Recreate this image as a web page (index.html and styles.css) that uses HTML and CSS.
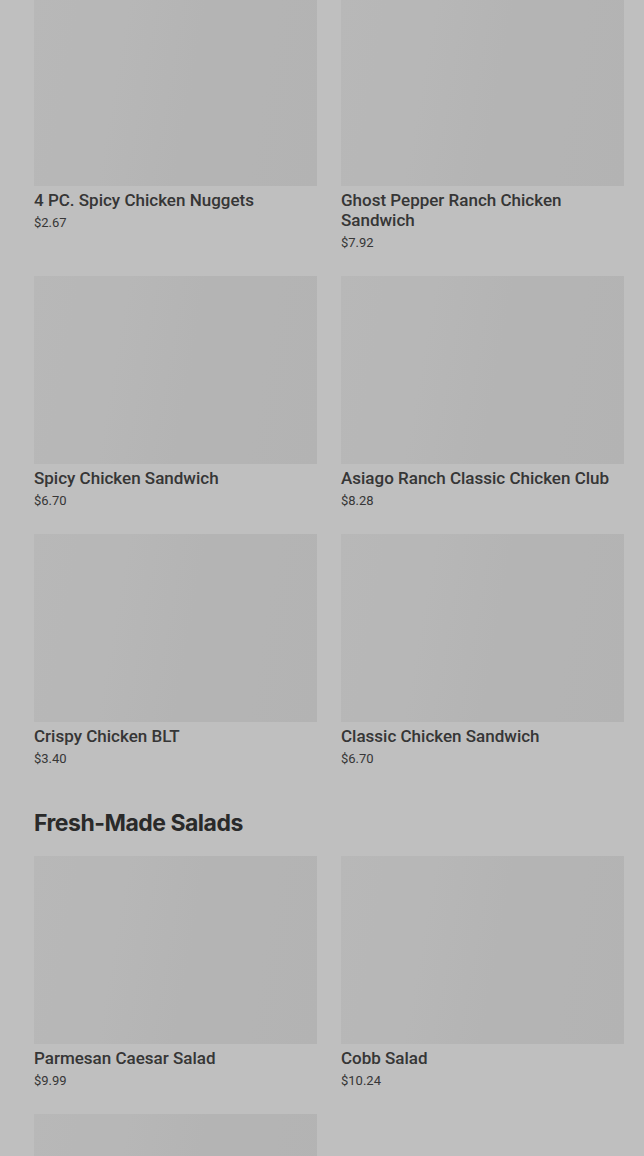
FILE: index.html
```html
<!DOCTYPE html>
<html lang="en">
<head>
  <meta charset="UTF-8">
  <meta name="viewport" content="width=device-width, initial-scale=1.0">
  <title>Menu</title>
  <link rel="stylesheet" href="styles.css">
</head>
<body>
  <main class="menu">
    <section class="category">
      <div class="item-grid">
        <div class="item">
          <div class="item-image"></div>
          <h3 class="item-name">4 PC. Spicy Chicken Nuggets</h3>
          <p class="item-price">$2.67</p>
        </div>
        <div class="item">
          <div class="item-image"></div>
          <h3 class="item-name">Ghost Pepper Ranch Chicken Sandwich</h3>
          <p class="item-price">$7.92</p>
        </div>
        <div class="item">
          <div class="item-image"></div>
          <h3 class="item-name">Spicy Chicken Sandwich</h3>
          <p class="item-price">$6.70</p>
        </div>
        <div class="item">
          <div class="item-image"></div>
          <h3 class="item-name">Asiago Ranch Classic Chicken Club</h3>
          <p class="item-price">$8.28</p>
        </div>
        <div class="item">
          <div class="item-image"></div>
          <h3 class="item-name">Crispy Chicken BLT</h3>
          <p class="item-price">$3.40</p>
        </div>
        <div class="item">
          <div class="item-image"></div>
          <h3 class="item-name">Classic Chicken Sandwich</h3>
          <p class="item-price">$6.70</p>
        </div>
      </div>
    </section>

    <section class="category">
      <h2 class="category-title">Fresh-Made Salads</h2>
      <div class="item-grid">
        <div class="item">
          <div class="item-image"></div>
          <h3 class="item-name">Parmesan Caesar Salad</h3>
          <p class="item-price">$9.99</p>
        </div>
        <div class="item">
          <div class="item-image"></div>
          <h3 class="item-name">Cobb Salad</h3>
          <p class="item-price">$10.24</p>
        </div>
        <div class="item">
          <div class="item-image"></div>
        </div>
      </div>
    </section>
  </main>

  <div class="backdrop"></div>
</body>
</html>
```

FILE: styles.css
```css
body {
  font-family: 'Roboto', 'Liberation Sans', sans-serif;
  margin: 0;
  padding: 0;
  background-color: #fff;
  color: #333;
}

.menu {
  margin-top: -2px;
  padding: 0 20px 0 34px;
}

.category-title {
  font-family: 'Inter', 'Liberation Sans', sans-serif;
  font-size: 23px;
  font-weight: 700;
  letter-spacing: -0.5px;
  line-height: 32px;
  margin: 38px 0 17px;
  color: #383838;
}

.item-grid {
  display: grid;
  grid-template-columns: 1fr 1fr;
  column-gap: 24px;
  row-gap: 23px;
}

.item-image {
  height: 188px;
  background: linear-gradient(100deg, #f6f6f6 0%, #f4f4f4 30%, #f1f1f1 55%, #efefef 100%);
}

.item-name {
  margin: 4px 0 0;
  font-size: 17px;
  font-weight: 500;
  line-height: 20px;
  color: #484848;
}

.item-price {
  margin: 3px 0 0;
  font-size: 13px;
  line-height: 20px;
  color: #4a4a4a;
}

.backdrop {
  position: fixed;
  inset: 0;
  background-color: rgba(0, 0, 0, 0.25);
}
```
